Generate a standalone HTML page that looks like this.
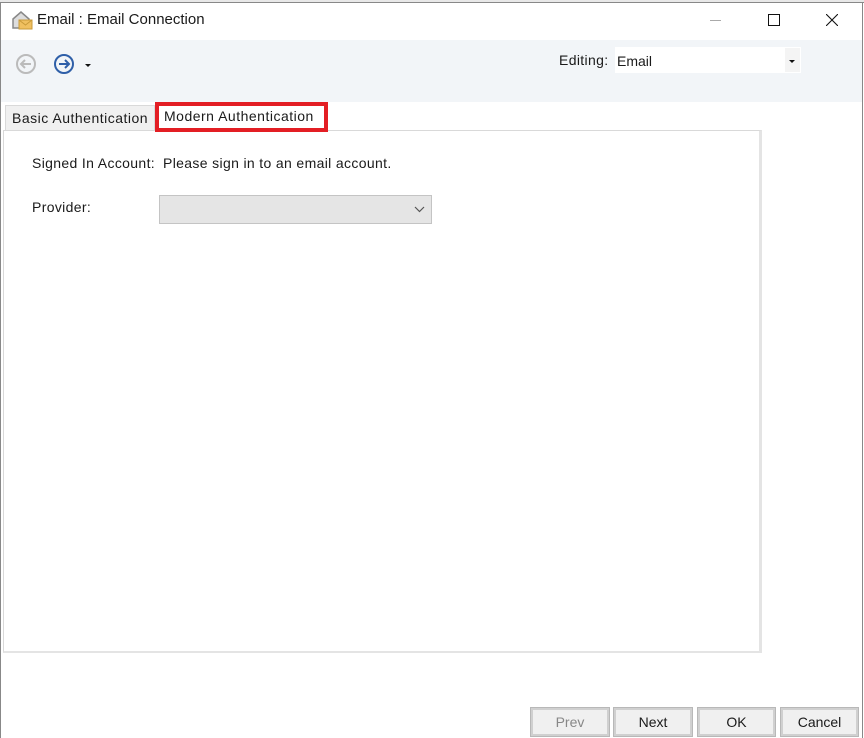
<!DOCTYPE html>
<html><head><meta charset="utf-8"><style>
*{margin:0;padding:0;box-sizing:border-box}
body{width:864px;height:738px;background:#fff;font-family:"Liberation Sans",sans-serif;font-size:14px;color:#1a1a1a;position:relative;overflow:hidden;letter-spacing:0.35px}
.a{position:absolute}
.btn{position:absolute;top:707px;height:30px;border:3px solid #d0d0d0;background:#f0f0f0;text-align:center;line-height:24px;font-size:14px;outline:1px solid #b8b8b8;outline-offset:-1px;letter-spacing:0}
</style></head><body>
<div class="a" style="left:0;top:0;width:864px;height:3px;background:#e8e8e8"></div>
<div class="a" style="left:0;top:2px;width:864px;height:1px;background:#888"></div>
<div class="a" style="left:0;top:2px;width:1px;height:736px;background:#888"></div>
<div class="a" style="left:862px;top:2px;width:1px;height:736px;background:#888"></div>
<svg class="a" style="left:11px;top:10px" width="22" height="20" viewBox="0 0 22 20">
<path d="M2 9 L10 2 L18 9 L18 18 L2 18 Z" fill="#ddd" stroke="#888" stroke-width="1.5"/>
<rect x="8" y="10" width="13" height="9" fill="#f0c060" stroke="#c99a3a"/>
<path d="M8 10 L14.5 15 L21 10" fill="none" stroke="#c99a3a"/></svg>
<div class="a" style="left:37px;top:11px;font-size:15px;letter-spacing:0">Email : Email Connection</div>
<div class="a" style="left:710px;top:20px;width:11px;height:1px;background:#aaa"></div>
<div class="a" style="left:768px;top:14px;width:12px;height:12px;border:1px solid #111"></div>
<svg class="a" style="left:826px;top:14px" width="12" height="12"><path d="M0 0L12 12M12 0L0 12" stroke="#111" stroke-width="1.1"/></svg>
<div class="a" style="left:1px;top:40px;width:861px;height:62px;background:#f2f5f8"></div>
<svg class="a" style="left:15px;top:53px" width="22" height="22"><circle cx="11" cy="11" r="9" fill="none" stroke="#bbb" stroke-width="2"/><path d="M16 11H6M10 7L6 11L10 15" fill="none" stroke="#bbb" stroke-width="2"/></svg>
<svg class="a" style="left:53px;top:53px" width="22" height="22"><circle cx="11" cy="11" r="9" fill="none" stroke="#2f5fa8" stroke-width="2"/><path d="M6 11H16M12 7L16 11L12 15" fill="none" stroke="#2f5fa8" stroke-width="2"/></svg>
<div class="a" style="left:85px;top:64px;border-left:3px solid transparent;border-right:3px solid transparent;border-top:3px solid #111"></div>
<div class="a" style="left:559px;top:52px">Editing:</div>
<div class="a" style="left:615px;top:47px;width:186px;height:26px;background:#fff"></div>
<div class="a" style="left:617px;top:53px;letter-spacing:0">Email</div>
<div class="a" style="left:785px;top:48px;width:15px;height:24px;background:#f4f4f4"></div>
<div class="a" style="left:789px;top:60px;border-left:3px solid transparent;border-right:3px solid transparent;border-top:3px solid #111"></div>
<div class="a" style="left:5px;top:105px;width:150px;height:26px;background:#f0f0f0;border:1px solid #d9d9d9;border-bottom:none"></div>
<div class="a" style="left:12px;top:110px;letter-spacing:0.5px">Basic Authentication</div>
<div class="a" style="left:3px;top:130px;width:759px;height:523px;border:1px solid #d9d9d9;border-right:3px solid #e4e4e4;border-bottom:2px solid #e4e4e4"></div>
<div class="a" style="left:155px;top:102px;width:173px;height:30px;background:#fff;border:4px solid #e31e24"></div>
<div class="a" style="left:164px;top:108px;letter-spacing:0.5px">Modern Authentication</div>
<div class="a" style="left:32px;top:155px">Signed In Account:</div>
<div class="a" style="left:163px;top:155px">Please sign in to an email account.</div>
<div class="a" style="left:32px;top:199px">Provider:</div>
<div class="a" style="left:159px;top:195px;width:273px;height:29px;background:#e5e5e5;border:1px solid #c4c4c4"></div>
<svg class="a" style="left:414px;top:206px" width="11" height="7"><path d="M1 1L5.5 5.5L10 1" fill="none" stroke="#555" stroke-width="1.2"/></svg>
<div class="btn" style="left:530px;width:80px;color:#888">Prev</div>
<div class="btn" style="left:613px;width:80px">Next</div>
<div class="btn" style="left:697px;width:79px">OK</div>
<div class="btn" style="left:780px;width:79px">Cancel</div>
</body></html>
